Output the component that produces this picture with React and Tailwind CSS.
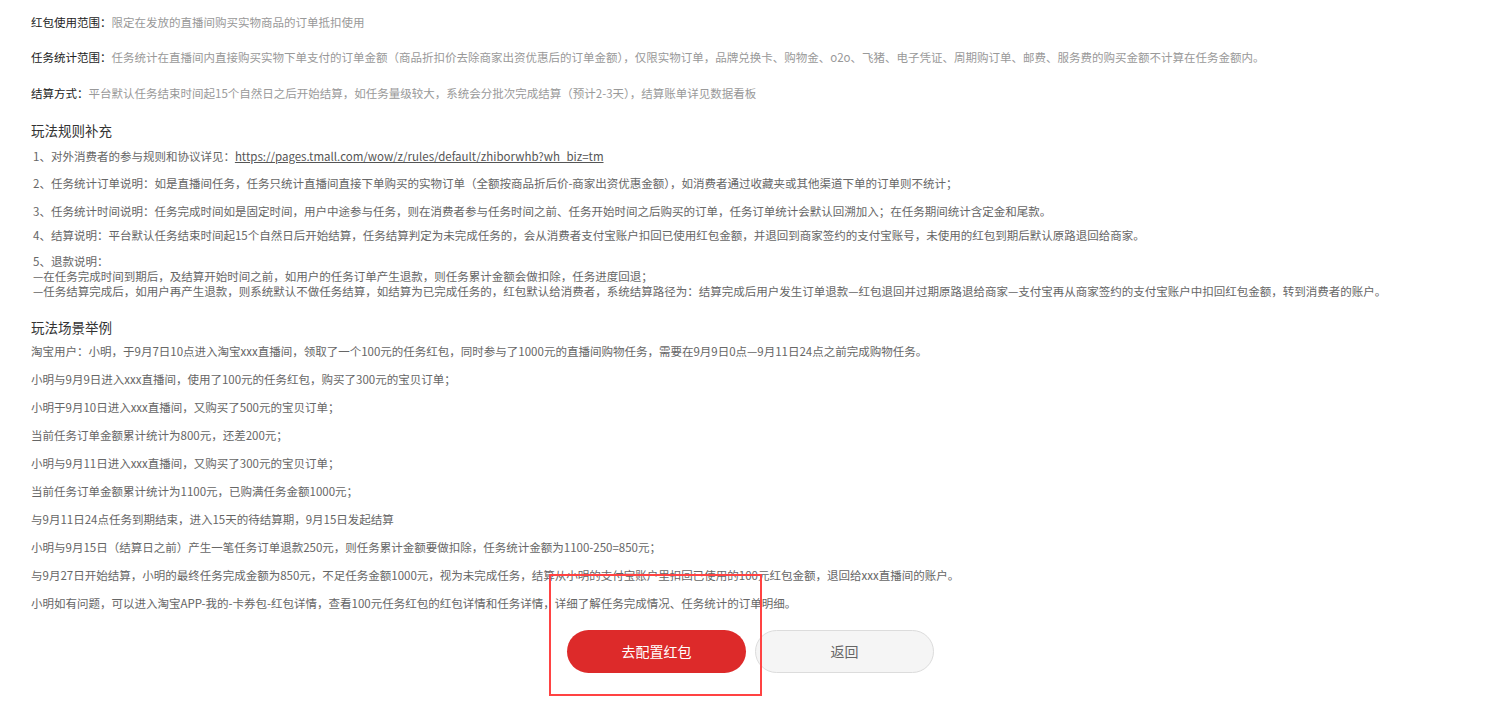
import React from 'react';

const font = { fontFamily: '"Noto Sans CJK SC", "Noto Sans", sans-serif' };

const summary = [
  {
    label: '红包使用范围：',
    text: '限定在发放的直播间购买实物商品的订单抵扣使用',
    mt: 'mt-0',
  },
  {
    label: '任务统计范围：',
    text: '任务统计在直播间内直接购买实物下单支付的订单金额（商品折扣价去除商家出资优惠后的订单金额），仅限实物订单，品牌兑换卡、购物金、o2o、飞猪、电子凭证、周期购订单、邮费、服务费的购买金额不计算在任务金额内。',
    mt: 'mt-[17px]',
  },
  {
    label: '结算方式：',
    text: '平台默认任务结束时间起15个自然日之后开始结算，如任务量级较大，系统会分批次完成结算（预计2-3天），结算账单详见数据看板',
    mt: 'mt-[18px]',
  },
];

const scenes = [
  '淘宝用户：小明，于9月7日10点进入淘宝xxx直播间，领取了一个100元的任务红包，同时参与了1000元的直播间购物任务，需要在9月9日0点—9月11日24点之前完成购物任务。',
  '小明与9月9日进入xxx直播间，使用了100元的任务红包，购买了300元的宝贝订单；',
  '小明于9月10日进入xxx直播间，又购买了500元的宝贝订单；',
  '当前任务订单金额累计统计为800元，还差200元；',
  '小明与9月11日进入xxx直播间，又购买了300元的宝贝订单；',
  '当前任务订单金额累计统计为1100元，已购满任务金额1000元；',
  '与9月11日24点任务到期结束，进入15天的待结算期，9月15日发起结算',
  '小明与9月15日（结算日之前）产生一笔任务订单退款250元，则任务累计金额要做扣除，任务统计金额为1100-250=850元；',
  '与9月27日开始结算，小明的最终任务完成金额为850元，不足任务金额1000元，视为未完成任务，结算从小明的支付宝账户里扣回已使用的100元红包金额，退回给xxx直播间的账户。',
  '小明如有问题，可以进入淘宝APP-我的-卡券包-红包详情，查看100元任务红包的红包详情和任务详情，详细了解任务完成情况、任务统计的订单明细。',
];

export default function App() {
  return (
    <div className="w-[1504px] min-h-[706px] bg-white pl-[31px] pt-[13px] text-[11.5px]" style={font}>
      {summary.map((row, i) => (
        <p key={i} className={`${row.mt} leading-[18px] whitespace-nowrap`}>
          <span className="text-[#222]">{row.label}</span>
          <span className="text-[#999]">{row.text}</span>
        </p>
      ))}

      <h3 className="mt-[18px] text-[13.5px] leading-[20px] text-[#333]">玩法规则补充</h3>
      <div className="pl-[2px] text-[#666]">
        <p className="mt-[7px] leading-[18px]">
          1、对外消费者的参与规则和协议详见：
          <a className="underline text-[#555]" href="#">https://pages.tmall.com/wow/z/rules/default/zhiborwhb?wh_biz=tm</a>
        </p>
        <p className="mt-[9px] leading-[18px] whitespace-nowrap">
          2、任务统计订单说明：如是直播间任务，任务只统计直播间直接下单购买的实物订单（全额按商品折后价-商家出资优惠金额），如消费者通过收藏夹或其他渠道下单的订单则不统计；
        </p>
        <p className="mt-[10px] leading-[18px] whitespace-nowrap">
          3、任务统计时间说明：任务完成时间如是固定时间，用户中途参与任务，则在消费者参与任务时间之前、任务开始时间之后购买的订单，任务订单统计会默认回溯加入；在任务期间统计含定金和尾款。
        </p>
        <p className="mt-[6px] leading-[18px] whitespace-nowrap">
          4、结算说明：平台默认任务结束时间起15个自然日后开始结算，任务结算判定为未完成任务的，会从消费者支付宝账户扣回已使用红包金额，并退回到商家签约的支付宝账号，未使用的红包到期后默认原路退回给商家。
        </p>
        <div className="mt-[10px] leading-[15px] whitespace-nowrap">
          <p>5、退款说明：</p>
          <p>—在任务完成时间到期后，及结算开始时间之前，如用户的任务订单产生退款，则任务累计金额会做扣除，任务进度回退；</p>
          <p>—任务结算完成后，如用户再产生退款，则系统默认不做任务结算，如结算为已完成任务的，红包默认给消费者，系统结算路径为：结算完成后用户发生订单退款—红包退回并过期原路退给商家—支付宝再从商家签约的支付宝账户中扣回红包金额，转到消费者的账户。</p>
        </div>
      </div>

      <h3 className="mt-[18px] text-[13.5px] leading-[20px] text-[#333]">玩法场景举例</h3>
      <div className="text-[#666]">
        {scenes.map((s, i) => (
          <p key={i} className={`${i === 0 ? 'mt-[5px]' : 'mt-[10px]'} leading-[18px] whitespace-nowrap`}>
            {s}
          </p>
        ))}
      </div>

      <div className="mt-[18px] flex justify-center gap-[9px] pr-[34px]">
        <div className="relative">
          <button className="w-[179px] h-[43px] rounded-full bg-[#dd2a2a] text-white text-[14px]">
            去配置红包
          </button>
          <div className="absolute left-[-18px] top-[-56px] w-[213px] h-[122px] border-2 border-[#ff4343] pointer-events-none" />
        </div>
        <button className="w-[179px] h-[43px] rounded-full bg-[#f5f5f5] border border-[#dcdcdc] text-[#666] text-[14px]">
          返回
        </button>
      </div>
    </div>
  );
}
